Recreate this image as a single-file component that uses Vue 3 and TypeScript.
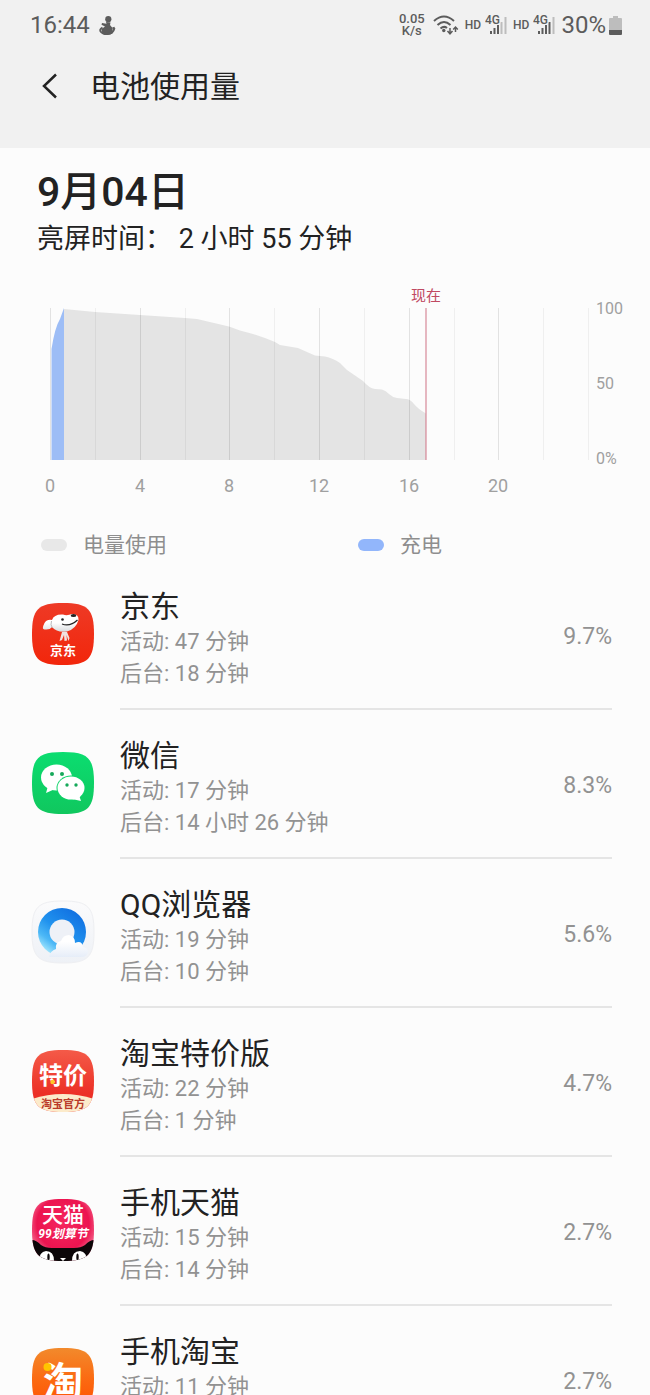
<script setup lang="ts">
interface AppUsage {
  id: string
  name: string
  active: string
  background: string
  percent: string
}

const apps: AppUsage[] = [
  { id: 'jd', name: '京东', active: '47 分钟', background: '18 分钟', percent: '9.7%' },
  { id: 'wechat', name: '微信', active: '17 分钟', background: '14 小时 26 分钟', percent: '8.3%' },
  { id: 'qq', name: 'QQ浏览器', active: '19 分钟', background: '10 分钟', percent: '5.6%' },
  { id: 'tejia', name: '淘宝特价版', active: '22 分钟', background: '1 分钟', percent: '4.7%' },
  { id: 'tmall', name: '手机天猫', active: '15 分钟', background: '14 分钟', percent: '2.7%' },
  { id: 'taobao', name: '手机淘宝', active: '11 分钟', background: '20 分钟', percent: '2.7%' },
]

const squircle = 'M31 0C56 0 62 6 62 31S56 62 31 62 0 56 0 31 6 0 31 0Z'

const plot = { left: 50, right: 588, top: 28, bottom: 180 }
const hourX = (h: number): number => Math.round(plot.left + ((plot.right - plot.left) * h) / 24)
const gridHours = Array.from({ length: 13 }, (_, i) => i * 2)
const labelHours = [0, 4, 8, 12, 16, 20]
const levels = [
  { text: '100', y: 34 },
  { text: '50', y: 109 },
  { text: '0%', y: 184 },
]
</script>

<template>
  <div class="screen">
    <header class="top">
      <div class="status">
        <span class="clock">16:44</span>
        <svg class="figure" viewBox="0 0 17 19" aria-hidden="true">
          <circle cx="9.3" cy="3.2" r="3.1" />
          <path d="M7 6L11.500 6.500 11 9 13.500 12 13.500 17.500Q9 20 3.500 18L2.500 13 6 10.500 2.500 8.800 3 7 7.500 7.800Z" />
          <path class="line" d="M3.500 11.500Q0 13.500 2 16T8.500 18Q14 18 15.500 12M13.500 12.500L15.800 11.700" />
        </svg>
        <span class="spacer"></span>
        <span class="speed"><span>0.05</span><span>K/s</span></span>
        <svg class="wifi" viewBox="0 0 26 21" aria-hidden="true">
          <path class="line" d="M1 6Q11-3 21 6M4.500 10Q11 4 17.500 10M7.500 13.500Q11 10.500 14 13" />
          <circle cx="10.800" cy="15.500" r="1.700" />
          <path class="thin" d="M17 13V18M14.500 16L17 18.800 19.500 16M22.500 17V12M20.200 14.500L22.500 12 24.800 14.500" />
        </svg>
        <template v-for="sim in 2" :key="sim">
          <span class="hd">HD</span>
          <svg class="signal" viewBox="0 0 22 20" aria-hidden="true">
            <path d="M5 16h2v3H5zM8.500 13h2v6h-2zM12 10h2v9h-2z" />
            <path :class="{ faint: sim === 1 }" d="M15.500 7h2v12h-2z" />
            <path class="faint" d="M19.500 2h2v17h-2z" />
            <text x="0" y="9">4G</text>
          </svg>
        </template>
        <span class="charge">30%</span>
        <svg class="battery" viewBox="0 0 13 19" aria-hidden="true">
          <path class="faint" d="M4 0h5v2h3q1 0 1 1v11H0V3q0-1 1-1h3z" />
          <path d="M0 14h13v4q0 1-1 1H1q-1 0-1-1z" />
        </svg>
      </div>
      <div class="bar">
        <button class="back" type="button" aria-label="返回">
          <svg viewBox="0 0 16 26" aria-hidden="true"><path d="M14 1.500L2 13 14 24.500" /></svg>
        </button>
        <h1>电池使用量</h1>
      </div>
    </header>

    <main>
      <section class="summary">
        <h2>9月04日</h2>
        <p>亮屏时间： 2 小时 55 分钟</p>
      </section>

      <svg class="chart" viewBox="0 0 650 220" role="img" aria-label="电量使用">
        <path
          class="usage"
          d="M64 29L95 32 140 35 185 38 197 39 229 46.500 240 50.500 253 54 265 58 275 62 280 65 298 68 307 72 315 75.500 325 76.500Q333 78 340 83L347 90 363 101Q369 108 375 109L382 109.500Q386 110.500 389 114 392 117 397 118L406 119Q410 119 414 124T426 133.500V180H64Z"
        />
        <path class="filled" d="M51.500 180V69Q55 47 60 39L64 28V180Z" />
        <path
          v-for="h in gridHours"
          :key="h"
          :class="['grid', { strong: h % 4 === 0 && h < 24 }]"
          :d="`M${hourX(h) + 0.5} ${plot.top}V${plot.bottom}`"
        />
        <path class="now" d="M426 28V180" />
        <text class="now-label" x="426" y="21">现在</text>
        <text v-for="h in labelHours" :key="h" class="hour" :x="hourX(h)" y="212">{{ h }}</text>
        <text v-for="l in levels" :key="l.text" class="level" x="596" :y="l.y">{{ l.text }}</text>
      </svg>

      <div class="legend">
        <span class="key"><i class="swatch"></i>电量使用</span>
        <span class="key"><i class="swatch blue"></i>充电</span>
      </div>

      <ul class="apps">
        <li v-for="app in apps" :key="app.id">
          <svg v-if="app.id === 'jd'" class="icon" viewBox="0 0 62 62" aria-hidden="true">
            <defs>
              <linearGradient id="jd-bg" x1="0" y1="0" x2="0" y2="1"><stop stop-color="#ee3a26" /><stop offset="1" stop-color="#f2260b" /></linearGradient>
              <linearGradient id="jd-dog" x1="0" y1="0" x2="0" y2="1"><stop offset="0.500" stop-color="#fff" /><stop offset="1" stop-color="#d9dcdf" /></linearGradient>
            </defs>
            <path :d="squircle" fill="url(#jd-bg)" />
            <path d="M20 17Q15 16 12.500 20 9 27 13 26.500 18 27 20 24 25 30 35 28.500 44 26 46.500 17 47 11 40 11 35 13 31 11.500 22 11 20 17Z" fill="url(#jd-dog)" />
            <path d="M19.500 18Q18 22 20.500 25" fill="none" stroke="#b9bbbd" />
            <ellipse cx="41.500" cy="12.500" rx="2.800" ry="1.600" fill="#222" />
            <circle cx="30.500" cy="16.500" r="1.300" fill="#222" />
            <path d="M30 21Q38 24 45.500 17" fill="none" stroke="#222" stroke-width="1.300" />
            <path d="M30 29L27.500 38 30 37 32 32 32.500 38 35 37.500 34.500 32 36.500 38 37.500 35 35 29Z" fill="#f1e3e0" />
            <text x="31" y="52" font-size="13" font-weight="700" fill="#fff" text-anchor="middle">京东</text>
          </svg>

          <svg v-else-if="app.id === 'wechat'" class="icon" viewBox="0 0 62 62" aria-hidden="true">
            <defs><linearGradient id="wx-bg" x1="0" y1="0" x2="0" y2="1"><stop stop-color="#0bdd70" /><stop offset="1" stop-color="#10c75e" /></linearGradient></defs>
            <path :d="squircle" fill="url(#wx-bg)" />
            <ellipse cx="24.500" cy="25.500" rx="15.500" ry="13" fill="#fff" />
            <path d="M16 34L14 41 23 37Z" fill="#fff" />
            <ellipse cx="39" cy="36" rx="14.500" ry="12.500" fill="#0ed369" />
            <ellipse cx="39" cy="36" rx="13.500" ry="11.500" fill="#fff" />
            <path d="M40 47L49 49 47 43Z" fill="#fff" />
            <g fill="#16a95a"><circle cx="20" cy="22" r="2" /><circle cx="30" cy="22" r="2" /><circle cx="35" cy="33" r="1.700" /><circle cx="44" cy="33" r="1.700" /></g>
          </svg>

          <svg v-else-if="app.id === 'qq'" class="icon" viewBox="0 0 62 62" aria-hidden="true">
            <defs>
              <linearGradient id="qq-bg" x1="0" y1="0" x2="0" y2="1"><stop stop-color="#fbfbfc" /><stop offset="1" stop-color="#eef1f6" /></linearGradient>
              <linearGradient id="qq-ring" x1="0.800" y1="0.100" x2="0.200" y2="0.900"><stop stop-color="#1272e2" /><stop offset="0.500" stop-color="#2092ee" /><stop offset="0.800" stop-color="#4db8f6" /><stop offset="1" stop-color="#9be2fc" /></linearGradient>
              <linearGradient id="qq-cloud" x1="0" y1="0" x2="0" y2="1"><stop offset="0.300" stop-color="#fff" /><stop offset="1" stop-color="#e6edf8" /></linearGradient>
            </defs>
            <path :d="squircle" fill="url(#qq-bg)" stroke="#eeeff2" />
            <circle cx="30" cy="31" r="24" fill="url(#qq-ring)" />
            <circle cx="30" cy="31" r="12.500" fill="#eef1f7" />
            <path d="M17 56Q18 50 24 48 23 41 29 40 31 34 37 34 43 35 43 42 50 39 51 46 56 47 56 51 55 56 49 56Z" fill="url(#qq-cloud)" />
          </svg>

          <svg v-else-if="app.id === 'tejia'" class="icon" viewBox="0 0 62 62" aria-hidden="true">
            <defs>
              <linearGradient id="tj-bg" x1="0" y1="0" x2="0" y2="1"><stop stop-color="#f45a48" /><stop offset="0.700" stop-color="#ec3026" /></linearGradient>
              <clipPath id="tj-clip"><path :d="squircle" /></clipPath>
            </defs>
            <g clip-path="url(#tj-clip)">
              <path d="M0 0H62V62H0Z" fill="url(#tj-bg)" />
              <path d="M0 49Q31 39 62 49V62H0Z" fill="#fcebcb" />
            </g>
            <text x="31" y="34" font-size="24" font-weight="700" fill="#fff" text-anchor="middle">特价</text>
            <circle cx="20.500" cy="32" r="2.200" fill="#ffc928" />
            <text x="31" y="58" font-size="11" font-weight="700" fill="#b93b2b" text-anchor="middle">淘宝官方</text>
          </svg>

          <svg v-else-if="app.id === 'tmall'" class="icon" viewBox="0 0 62 62" aria-hidden="true">
            <defs>
              <radialGradient id="tm-bg" cx="0.500" cy="0.400" r="0.600"><stop stop-color="#f5265e" /><stop offset="0.700" stop-color="#ec1450" /><stop offset="1" stop-color="#f57597" /></radialGradient>
              <clipPath id="tm-clip"><path :d="squircle" /></clipPath>
            </defs>
            <g clip-path="url(#tm-clip)">
              <path d="M0 0H62V62H0Z" fill="url(#tm-bg)" />
              <path d="M0 41Q4 41 9 46 13 49 20 49H42Q49 49 53 46 58 41 62 41V62H0Z" fill="#0c0709" />
              <path d="M7 62Q7 53 14 52 22 52 22 62ZM40 62Q40 52 48 52 55 53 55 62Z" fill="#fff" />
              <ellipse cx="16.500" cy="58" rx="1.200" ry="3.500" fill="#0c0709" />
              <ellipse cx="45.500" cy="58" rx="1.200" ry="3.500" fill="#0c0709" />
              <path d="M28 59H34L31 62Z" fill="#fff" />
            </g>
            <text x="31" y="23" font-size="21" font-weight="500" fill="#fff" text-anchor="middle">天猫</text>
            <text x="31" y="39" font-size="12" font-weight="700" font-style="italic" fill="#fff" text-anchor="middle">99划算节</text>
          </svg>

          <svg v-else class="icon" viewBox="0 0 62 62" aria-hidden="true">
            <defs><linearGradient id="tb-bg" x1="0" y1="0" x2="0" y2="1"><stop stop-color="#f28a2c" /><stop offset="0.500" stop-color="#fb6a12" /><stop offset="1" stop-color="#ff5000" /></linearGradient></defs>
            <path :d="squircle" fill="url(#tb-bg)" />
            <text x="31" y="48" font-size="40" font-weight="700" fill="#fff" text-anchor="middle">淘</text>
            <circle cx="15.500" cy="19" r="4" fill="#ffc400" />
          </svg>

          <div class="body">
            <div class="info">
              <h3>{{ app.name }}</h3>
              <p>活动: {{ app.active }}</p>
              <p>后台: {{ app.background }}</p>
            </div>
            <span class="percent">{{ app.percent }}</span>
          </div>
        </li>
      </ul>
    </main>
  </div>
</template>

<style>
body {
  margin: 0;
  background: #fcfcfc;
}
</style>

<style scoped>
.screen {
  height: 100vh;
  overflow-y: auto;
  scrollbar-width: none;
  background: #fcfcfc;
  color: #222;
  font-family: Roboto, "Noto Sans CJK SC", sans-serif;
}
h1, h2, h3, p, ul {
  margin: 0;
  padding: 0;
  font-weight: 400;
}
.top {
  height: 148px;
  background: #f1f1f1;
}
.status {
  display: flex;
  align-items: center;
  height: 50px;
  padding: 0 28px 0 30px;
  color: #5c5c5c;
  fill: #5c5c5c;
}
.clock, .charge {
  font-size: 24px;
  line-height: 28px;
}
.clock {
  margin-right: 9px;
}
.figure {
  width: 17px;
  height: 19px;
}
.line, .thin {
  fill: none;
  stroke: #5c5c5c;
  stroke-width: 2;
}
.thin {
  stroke-width: 1.5;
}
.faint {
  fill: #bdbdbd;
}
.spacer {
  flex: 1;
}
.speed {
  display: flex;
  flex-direction: column;
  align-items: center;
  margin-right: 8px;
  font-size: 13px;
  font-weight: 500;
  line-height: 12px;
}
.wifi {
  width: 26px;
  height: 21px;
  margin-right: 6px;
}
.hd {
  margin-right: 4px;
  font-size: 12px;
  font-weight: 500;
}
.signal {
  width: 22px;
  height: 20px;
  margin-right: 6px;
}
.signal text {
  font-size: 12px;
  font-weight: 500;
  stroke: #f1f1f1;
  stroke-width: 2;
  paint-order: stroke;
}
.charge {
  margin-right: 3px;
}
.battery {
  width: 13px;
  height: 19px;
}
.bar {
  display: flex;
  align-items: center;
  height: 72px;
  padding-left: 32px;
}
.back {
  display: flex;
  align-items: center;
  justify-content: center;
  width: 36px;
  height: 48px;
  margin-right: 22px;
  padding: 0;
  border: 0;
  background: none;
}
.back svg {
  width: 16px;
  height: 26px;
  fill: none;
  stroke: #222;
  stroke-width: 2.5;
}
h1 {
  padding-top: 2px;
  font-size: 30px;
  line-height: 40px;
}
.summary {
  padding: 19px 37px 0;
}
h2 {
  font-size: 41px;
  font-weight: 500;
  line-height: 50px;
}
.summary p {
  margin-top: 4px;
  font-size: 27px;
  line-height: 36px;
}
.chart {
  display: block;
  width: 100%;
  margin-top: 23px;
}
.chart text {
  fill: #a0a0a0;
}
.usage {
  fill: #e4e4e4;
}
.filled {
  fill: #9dbdf6;
}
.grid {
  stroke: #000;
  stroke-opacity: 0.05;
}
.strong {
  stroke-opacity: 0.1;
}
.now {
  stroke: #cf7385;
}
.chart .now-label {
  fill: #c04a62;
  font-size: 15px;
  text-anchor: middle;
}
.hour {
  font-size: 18px;
  text-anchor: middle;
}
.level {
  font-size: 16px;
}
.legend {
  display: grid;
  grid-template-columns: 1fr 1fr;
  gap: 66px;
  margin-top: 31px;
  padding: 0 41px;
  color: #8e8e8e;
  font-size: 21px;
  line-height: 28px;
}
.key {
  display: flex;
  align-items: center;
  gap: 16px;
}
.swatch {
  width: 26px;
  height: 12px;
  border-radius: 6px;
  background: #e8e8e8;
}
.blue {
  background: #92b6fb;
}
.apps {
  margin-top: 2px;
  list-style: none;
}
.apps li {
  display: flex;
  align-items: center;
  gap: 26px;
  padding: 0 38px 0 32px;
}
.icon {
  flex: none;
  width: 62px;
  height: 62px;
  margin-bottom: 4px;
  overflow: visible;
}
.body {
  display: flex;
  flex: 1;
  align-items: center;
  justify-content: space-between;
  border-bottom: 2px solid #e5e5e5;
}
.info {
  padding: 28px 0 18px;
}
h3 {
  margin-bottom: 1px;
  font-size: 30px;
  line-height: 36px;
}
.info p {
  color: #929292;
  font-size: 22px;
  line-height: 32px;
}
.percent {
  padding-top: 4px;
  color: #929292;
  font-size: 23px;
}
</style>
